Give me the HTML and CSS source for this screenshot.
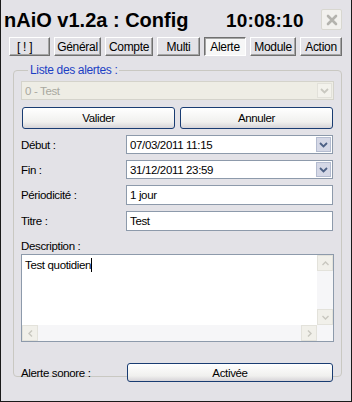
FILE: index.html
```html
<!DOCTYPE html>
<html>
<head>
  <title>nAiO Config</title>
  <link rel="stylesheet" href="styles.css">
</head>
<body>

  <div class="window">

    <header class="titlebar">
      <h1 class="apptitle">nAiO v1.2a : Config</h1>
      <span class="clock">10:08:10</span>
      <button class="closebtn" aria-label="Fermer">
        <svg width="12" height="12" viewBox="0 0 12 12">
          <path d="M2 2 L10 10 M10 2 L2 10" stroke="#b4b3ae" stroke-width="2.6" stroke-linecap="round"/>
        </svg>
      </button>
    </header>

    <nav class="tabs">
      <button class="tab t-bang">[ ! ]</button>
      <button class="tab t-gen">Général</button>
      <button class="tab t-cpt">Compte</button>
      <button class="tab t-multi">Multi</button>
      <button class="tab t-alerte active">Alerte</button>
      <button class="tab t-mod">Module</button>
      <button class="tab t-act">Action</button>
    </nav>

    <fieldset class="group">
      <legend>Liste des alertes :</legend>

      <div class="combo disabled">
        <span>0 - Test</span>
        <span class="arrow"><svg width="9" height="6" viewBox="0 0 9 6"><path d="M1 1 L4.5 4.5 L8 1" stroke="#c9c8c0" stroke-width="1.8" fill="none"/></svg></span>
      </div>

      <div class="actions">
        <button class="xpbtn">Valider</button>
        <button class="xpbtn">Annuler</button>
      </div>

      <div class="fields">
        <label>Début :</label>
        <div class="combo">
          <span>07/03/2011 11:15</span>
          <span class="arrow"><svg width="9" height="6" viewBox="0 0 9 6"><path d="M1 1 L4.5 4.5 L8 1" stroke="#4d6185" stroke-width="1.8" fill="none"/></svg></span>
        </div>

        <label>Fin :</label>
        <div class="combo">
          <span>31/12/2011 23:59</span>
          <span class="arrow"><svg width="9" height="6" viewBox="0 0 9 6"><path d="M1 1 L4.5 4.5 L8 1" stroke="#4d6185" stroke-width="1.8" fill="none"/></svg></span>
        </div>

        <label>Périodicité :</label>
        <div class="textbox">1 jour</div>

        <label>Titre :</label>
        <div class="textbox">Test</div>
      </div>

      <div class="desc">
        <label>Description :</label>
        <div class="memo">
          <div class="memo-text">Test quotidien<span class="caret"></span></div>
          <div class="vscroll">
            <span class="sbtn"><svg width="7" height="5" viewBox="0 0 7 5"><path d="M0.5 4 L3.5 1 L6.5 4" stroke="#c8c7bf" stroke-width="1.4" fill="none"/></svg></span>
            <span class="sbtn"><svg width="7" height="5" viewBox="0 0 7 5"><path d="M0.5 1 L3.5 4 L6.5 1" stroke="#c8c7bf" stroke-width="1.4" fill="none"/></svg></span>
          </div>
          <div class="hscroll">
            <span class="sbtn"><svg width="5" height="7" viewBox="0 0 5 7"><path d="M4 0.5 L1 3.5 L4 6.5" stroke="#c8c7bf" stroke-width="1.4" fill="none"/></svg></span>
            <span class="sbtn"><svg width="5" height="7" viewBox="0 0 5 7"><path d="M1 0.5 L4 3.5 L1 6.5" stroke="#c8c7bf" stroke-width="1.4" fill="none"/></svg></span>
          </div>
          <div class="corner"></div>
        </div>
      </div>

      <div class="sound">
        <label>Alerte sonore :</label>
        <button class="xpbtn">Activée</button>
      </div>
    </fieldset>

  </div>

</body>
</html>
```

FILE: styles.css
```css
body{
    margin: 0;
    font-family: "Liberation Sans", Arial, sans-serif;
    font-size: 11.5px;
    letter-spacing: -0.35px;
    color: #000;
}

.window{
    width: 352px;
    height: 402px;
    box-sizing: border-box;
    background: #e3e2e7;
    border: 1px solid #1a1a1a;
    border-top: none;
    padding: 0 9px 0 8px;
}

.titlebar{
    display: flex;
    align-items: center;
    height: 37px;
    padding-top: 2px;
    box-sizing: border-box;
    letter-spacing: 0;
}

.apptitle{
    width: 222px;
    margin: 2px 0 0 -5px;
    font-size: 20px;
    font-weight: bold;
    white-space: nowrap;
}

.clock{
    margin-top: 2px;
    font-size: 19px;
    font-weight: bold;
    letter-spacing: 0.2px;
}

.closebtn{
    margin-left: auto;
    width: 21px;
    height: 21px;
    padding: 0;
    display: flex;
    align-items: center;
    justify-content: center;
    background: #f2f1ee;
    border: 1px solid #d8d7d0;
    border-radius: 2px;
}

.tabs{
    display: flex;
    gap: 4px;
    height: 19px;
}

.tab{
    font: inherit;
    letter-spacing: -0.3px;
    font-size: 12px;
    padding: 0;
    height: 19px;
    background: #e3e2e7;
    border: 1px solid;
    border-color: #ffffff #707070 #707070 #ffffff;
    box-shadow: inset -1px -1px 0 #a5a5a5;
}

.t-bang{ width: 41px; text-align: left; padding-left: 7px; }
.t-gen{ width: 47px; }
.t-cpt{ width: 48px; }
.t-multi{ width: 43px; }
.t-alerte{ width: 42px; }
.t-mod{ width: 46px; }
.t-act{ width: 42px; }

.tab.active{
    background: #f7f7f7;
    border-color: #707070 #ffffff #ffffff #707070;
    box-shadow: inset 1px 1px 0 #a5a5a5;
}

.group{
    margin: 7px 0 0 4px;
    height: 308px;
    padding: 4px 7px 0 7px;
    border: 1px solid #c9c8c2;
    border-radius: 4px;
}

.group legend{
    color: #1c3fc4;
    font-size: 12px;
    padding: 0 2px;
    margin-left: 7px;
}

.combo{
    display: flex;
    align-items: center;
    height: 19px;
    box-sizing: border-box;
    background: #fff;
    border: 1px solid #8d9aab;
    padding-left: 3px;
}

.combo span:first-child{
    flex: 1;
}

.combo .arrow{
    width: 15px;
    height: 15px;
    margin-right: 1px;
    display: flex;
    align-items: center;
    justify-content: center;
    background: #d5d8e6;
    border: 1px solid #b4bcd0;
    box-sizing: border-box;
}

.combo.disabled{
    background: #eeede5;
    border-color: #d4d3cb;
    color: #a9a89f;
}

.combo.disabled .arrow{
    background: #f3f2ec;
    border-color: #e2e1da;
}

.actions{
    display: flex;
    gap: 5px;
    margin-top: 7px;
    padding: 0 1px 0 1px;
}

.xpbtn{
    font: inherit;
    letter-spacing: inherit;
    flex: 1;
    height: 22px;
    background: linear-gradient(#ffffff, #f0f0ee 70%, #d6d4d8);
    border: 1px solid #193c72;
    border-radius: 3px;
}

.fields{
    display: grid;
    grid-template-columns: 105px 1fr;
    row-gap: 6px;
    margin-top: 6px;
    padding-right: 1px;
    align-items: center;
}

.textbox{
    height: 20px;
    box-sizing: border-box;
    background: #fff;
    border: 1px solid #8d9aab;
    padding: 3px 3px 0;
}

.desc{
    margin-top: 9px;
}

.desc label{
    display: block;
    margin-bottom: 2px;
}

.memo{
    height: 86px;
    background: #fff;
    border: 1px solid #8d9aab;
    display: grid;
    grid-template-columns: 1fr 16px;
    grid-template-rows: 1fr 16px;
}

.memo-text{
    padding: 3px 3px;
}

.caret{
    display: inline-block;
    width: 1px;
    height: 14px;
    background: #000;
    vertical-align: -3px;
}

.vscroll{
    display: flex;
    flex-direction: column;
    justify-content: space-between;
    background: #f6f6f8;
}

.hscroll{
    display: flex;
    justify-content: space-between;
    background: #f6f6f8;
}

.corner{
    background: #f6f6f8;
}

.sbtn{
    width: 16px;
    height: 16px;
    box-sizing: border-box;
    display: flex;
    align-items: center;
    justify-content: center;
    background: #f1f0ea;
    border: 1px solid #e3e2db;
}

.sound{
    display: grid;
    grid-template-columns: 106px 1fr;
    align-items: center;
    margin-top: 21px;
    padding-right: 1px;
}

.sound .xpbtn{
    height: 19px;
}
```
